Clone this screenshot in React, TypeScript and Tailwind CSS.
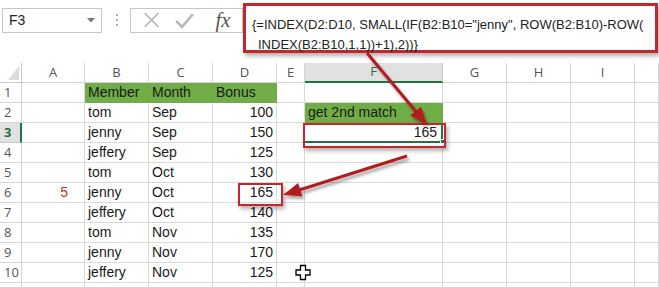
import React from "react";

const cellFont = { fontFamily: '"Liberation Sans", Arial, sans-serif' };
const hdrFont = { fontFamily: '"Open Sans", "Liberation Sans", sans-serif' };

type Cell = { t?: string; green?: boolean; right?: boolean; red?: boolean };

const rows: Cell[][] = [
  [{}, { t: "Member", green: true }, { t: "Month", green: true }, { t: "Bonus", green: true }, {}, {}],
  [{}, { t: "tom" }, { t: "Sep" }, { t: "100", right: true }, {}, { t: "get 2nd match", green: true }],
  [{}, { t: "jenny" }, { t: "Sep" }, { t: "150", right: true }, {}, { t: "165", right: true }],
  [{}, { t: "jeffery" }, { t: "Sep" }, { t: "125", right: true }, {}, {}],
  [{}, { t: "tom" }, { t: "Oct" }, { t: "130", right: true }, {}, {}],
  [{ t: "5", red: true }, { t: "jenny" }, { t: "Oct" }, { t: "165", right: true }, {}, {}],
  [{}, { t: "jeffery" }, { t: "Oct" }, { t: "140", right: true }, {}, {}],
  [{}, { t: "tom" }, { t: "Nov" }, { t: "135", right: true }, {}, {}],
  [{}, { t: "jenny" }, { t: "Nov" }, { t: "170", right: true }, {}, {}],
  [{}, { t: "jeffery" }, { t: "Nov" }, { t: "125", right: true }, {}, {}],
  [{}, {}, {}, {}, {}, {}],
];

const letters = ["A", "B", "C", "D", "E", "F", "G", "H", "I", ""];

export default function App() {
  return (
    <div className="relative w-[659px] h-[287px] overflow-hidden bg-white text-[#1a1a1a]" style={cellFont}>
      {/* Top bar */}
      <div className="flex items-start h-[63px]">
        <div className="ml-[2px] mt-[8px] w-[100px] h-[25px] border border-[#c6c6c6] flex items-center justify-between pl-[6px] pr-[6px] text-[14px] text-[#222]">
          <span>F3</span>
          <svg width="8" height="5" viewBox="0 0 8 5"><path d="M0 0 H8 L4 4.5 Z" fill="#777" /></svg>
        </div>
        <div className="ml-[14px] mt-[14px] flex flex-col gap-[3px]">
          <div className="w-[2px] h-[2px] bg-[#b0b0b0]" />
          <div className="w-[2px] h-[2px] bg-[#b0b0b0]" />
          <div className="w-[2px] h-[2px] bg-[#b0b0b0]" />
        </div>
        <div className="ml-[12px] mt-[8px] w-[113px] h-[25px] border border-[#c6c6c6] flex items-center">
          <svg width="113" height="25" viewBox="0 0 113 25">
            <path d="M14 5 L28 19 M28 5 L14 19" stroke="#b8b8b8" strokeWidth="1.6" fill="none" />
            <path d="M46 13 L52 19 L63 6" stroke="#b8b8b8" strokeWidth="2.6" fill="none" />
            <text x="86" y="19" fontFamily='"Liberation Serif", "DejaVu Serif", serif' fontStyle="italic" fontSize="21" fill="#555">fx</text>
          </svg>
        </div>
        <div className="absolute left-[243px] top-[3px] w-[415px] h-[50px] border-[3px] border-[#c1272d] bg-white shadow-[2px_3px_4px_rgba(0,0,0,0.3)] pl-[6px] pt-[9px] text-[13px] leading-[20px] text-[#222]">
          <div className="whitespace-nowrap">{'{=INDEX(D2:D10, SMALL(IF(B2:B10="jenny", ROW(B2:B10)-ROW('}</div>
          <div className="whitespace-nowrap pl-[6px]">{"INDEX(B2:B10,1,1))+1),2))}"}</div>
        </div>
      </div>

      {/* Grid */}
      <div className="grid grid-cols-[22px_63px_64px_64px_64px_28px_138px_64px_64px_64px_1fr]">
        {/* header row */}
        <div className="relative h-[20px] border-r border-b border-[#c8c8c8]">
          <svg className="absolute left-[8px] top-[3px]" width="11" height="14" viewBox="0 0 11 14">
            <path d="M11 0 V14 H0 Z" fill="#dcdcdc" />
          </svg>
        </div>
        {letters.map((l, i) => (
          <div
            key={"h" + i}
            style={hdrFont}
            className={
              l === "F"
                ? "h-[20px] border-r border-[#c8c8c8] border-b-2 border-b-[#217346] bg-[#e1e1e1] flex items-center justify-center text-[13px] text-[#217346]"
                : "h-[20px] border-r border-b border-[#d4d4d4] flex items-center justify-center text-[13px] text-[#555]"
            }
          >
            {l}
          </div>
        ))}
        {rows.map((r, ri) => (
          <React.Fragment key={"r" + ri}>
            <div
              style={hdrFont}
              className={
                ri === 2
                  ? "h-[20px] border-b border-[#c8c8c8] border-r-2 border-r-[#217346] bg-[#e1e1e1] flex items-center pl-[4px] text-[13px] font-bold text-[#217346]"
                  : "h-[20px] border-r border-b border-[#d4d4d4] flex items-center pl-[4px] text-[13px] text-[#555]"
              }
            >
              {ri < 10 ? ri + 1 : ""}
            </div>
            {Array.from({ length: 10 }).map((_, ci) => {
              const c: Cell = ci < 6 ? r[ci] : {};
              const isF3 = ri === 2 && ci === 5;
              let cls = "h-[20px] flex items-center whitespace-nowrap overflow-hidden text-[14px] ";
              if (c.green) cls += "bg-[#70ad47] border-r border-b border-[#70ad47] ";
              else if (isF3) cls += "border-r-2 border-b-2 border-[#217346] ";
              else cls += "border-r border-b border-[#d9d9d9] ";
              if (c.right) cls += "justify-end pr-[3px] ";
              else cls += "pl-[3px] ";
              if (c.red) cls += "justify-end pr-[16px] text-[#c0302c] ";
              if (isF3) cls += "pr-[4px] ";
              return (
                <div key={"c" + ri + "-" + ci} className={cls}>
                  {c.t}
                </div>
              );
            })}
          </React.Fragment>
        ))}
      </div>

      {/* Fill handle */}
      <div className="absolute left-[440px] top-[139px] w-[5px] h-[5px] bg-[#217346] border border-white" />

      {/* Red highlight boxes */}
      <div className="absolute left-[303px] top-[123px] w-[143px] h-[25px] border-[2px] border-[#c1272d] shadow-[2px_3px_4px_rgba(0,0,0,0.3)]" />
      <div className="absolute left-[238px] top-[183px] w-[45px] h-[23px] border-[2px] border-[#c1272d] shadow-[2px_3px_4px_rgba(0,0,0,0.3)]" />

      {/* Arrows & cursor */}
      <svg className="absolute left-0 top-0 pointer-events-none" width="659" height="287" viewBox="0 0 659 287">
        <defs>
          <filter id="sh" x="-20%" y="-20%" width="140%" height="140%">
            <feDropShadow dx="2" dy="3" stdDeviation="1.8" floodColor="#000" floodOpacity="0.35" />
          </filter>
        </defs>
        <g filter="url(#sh)">
          <line x1="367" y1="53" x2="418" y2="114" stroke="#b31b1f" strokeWidth="3" />
          <polygon points="427,125 410.2,115.5 421,106.7" fill="#b31b1f" />
          <line x1="407" y1="156" x2="296" y2="191" stroke="#b31b1f" strokeWidth="3" />
          <polygon points="283,195 298.1,182.9 302.3,196.3" fill="#b31b1f" />
        </g>
        <path d="M300.5 265.5 h5 v4.5 h4.5 v5 h-4.5 v4.5 h-5 v-4.5 h-4.5 v-5 h4.5 z" fill="#fff" stroke="#000" strokeWidth="1.3" />
      </svg>
    </div>
  );
}
